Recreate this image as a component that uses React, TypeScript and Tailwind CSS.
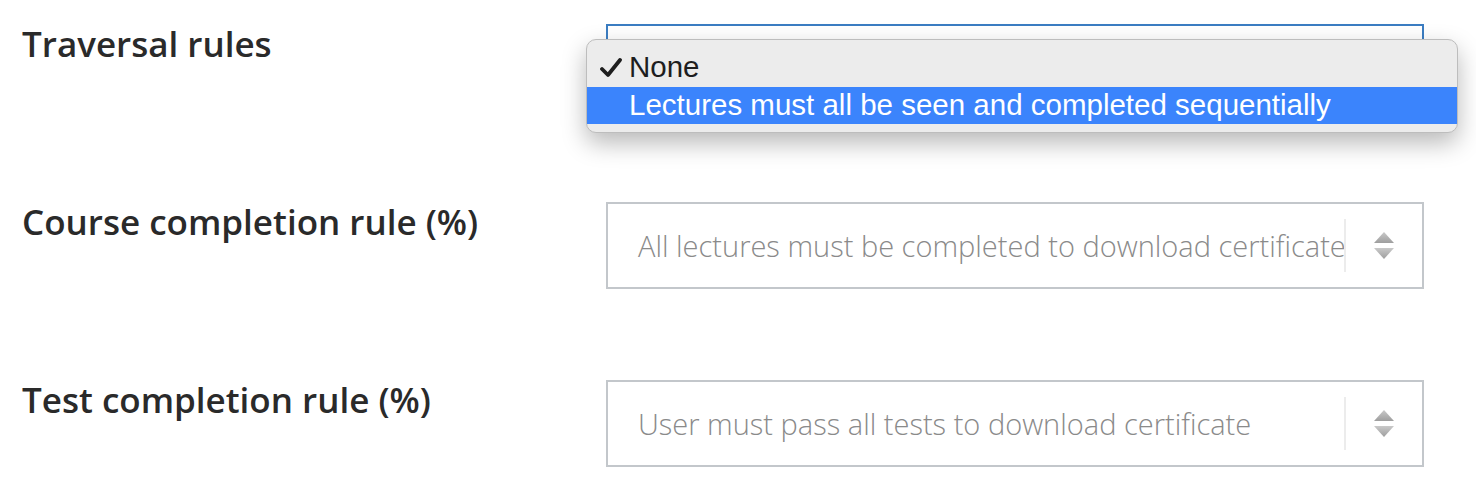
import * as React from 'react';

const LABEL_FONT = { fontFamily: '"Open Sans", Lato, sans-serif' };
const MENU_FONT = { fontFamily: '"Liberation Sans", Arial, sans-serif' };

function Arrows() {
  return (
    <svg width="22" height="30" viewBox="0 0 22 30">
      <defs>
        <linearGradient id="ag" x1="0" y1="0" x2="0" y2="1">
          <stop offset="0" stopColor="#c9c9c9" />
          <stop offset="1" stopColor="#9e9e9e" />
        </linearGradient>
      </defs>
      <path d="M11 1 L21 12 L1 12 Z" fill="url(#ag)" />
      <path d="M1 17 L21 17 L11 28 Z" fill="url(#ag)" />
    </svg>
  );
}

function FakeSelect({ value, focused }: { value?: string; focused?: boolean }) {
  return (
    <div
      className={
        'relative flex h-[87px] w-[818px] items-stretch bg-white ' +
        (focused ? 'border-2 border-[#3b7dc2]' : 'border-2 border-[#c3c7cb]')
      }
    >
      <div
        className="flex min-w-0 flex-1 items-center whitespace-nowrap pl-[30px] text-[29px] font-light text-[#8a8a8a]"
        style={LABEL_FONT}
      >
        {value}
      </div>
      {!focused && (
        <div className="my-[15px] flex w-[78px] shrink-0 items-center justify-center border-l-2 border-[#ececec]">
          <Arrows />
        </div>
      )}
    </div>
  );
}

function Row({ label, children }: { label: string; children: React.ReactNode }) {
  return (
    <div className="flex items-start">
      <div
        className="w-[584px] shrink-0 text-[35px] font-semibold leading-[40px] text-[#2a2a2a]"
        style={LABEL_FONT}
      >
        {label}
      </div>
      {children}
    </div>
  );
}

export default function App() {
  return (
    <div className="h-[488px] w-[1476px] overflow-hidden bg-white pl-[22px] pt-[24px]">
      <div className="flex flex-col gap-[91px]">
        <Row label="Traversal rules">
          <div className="relative">
            <FakeSelect focused />
            <div
              className="absolute left-[-20px] top-[15px] w-[872px] rounded-[10px] border border-[#bdbdbd] bg-[#ececec] py-[8px] shadow-[0_10px_24px_rgba(0,0,0,0.28)]"
              style={MENU_FONT}
            >
              <div className="flex h-[39px] items-center text-[29.5px] text-[#1e1e1e]">
                <span className="flex w-[42px] justify-end pr-[7px]">
                  <svg width="22" height="20" viewBox="0 0 22 20">
                    <path d="M2 11 L8 17 L20 2" fill="none" stroke="#1e1e1e" strokeWidth="3.8" strokeLinecap="round" strokeLinejoin="round" />
                  </svg>
                </span>
                <span>None</span>
              </div>
              <div className="flex h-[37px] items-center bg-[#3b84fc] pl-[42px] text-[29.5px] text-white">
                Lectures must all be seen and completed sequentially
              </div>
            </div>
          </div>
        </Row>
        <Row label="Course completion rule (%)">
          <FakeSelect value="All lectures must be completed to download certificate" />
        </Row>
        <Row label="Test completion rule (%)">
          <FakeSelect value="User must pass all tests to download certificate" />
        </Row>
      </div>
    </div>
  );
}
